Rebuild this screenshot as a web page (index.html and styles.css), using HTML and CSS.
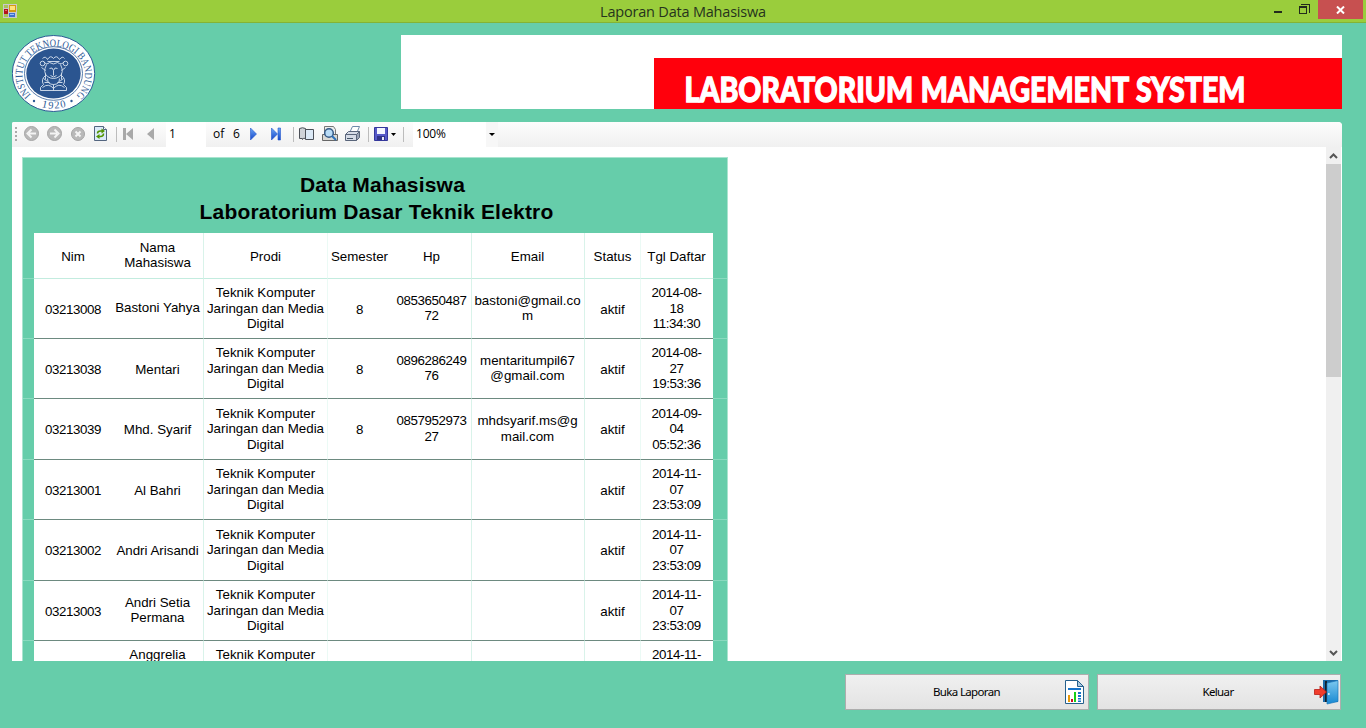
FILE: index.html
```html
<!DOCTYPE html>
<html lang="id">
<head>
<meta charset="utf-8">
<title>Laporan Data Mahasiswa</title>
<link rel="stylesheet" href="styles.css">
</head>
<body>
<div class="window">
  <header class="titlebar">
    <svg class="app-icon" width="14" height="14" viewBox="0 0 14 14"><path fill="#c9c9c9" d="M0 0h14v14H0z"/><path fill="#a9c25a" d="M1 1h4v3H1zM1 10h4v3H1z"/><path fill="#b3141a" d="M1 5h4v5H1z"/><path fill="#ee6a6a" d="M2 6h2v1H2z"/><path fill="#d39a12" d="M6 1h7v7H6z"/><path fill="#ffe27a" d="M7 2h5v4H7z"/><path fill="#3d6fd0" d="M6 9h6v4H6z"/><path fill="#9cc0f5" d="M7 10h4v1H7z"/></svg>
    <h1 class="caption">Laporan Data Mahasiswa</h1>
    <svg class="controls" width="54" height="20" viewBox="0 0 54 20" shape-rendering="crispEdges"><path fill="#222b1c" d="M10 11h8v2h-8z"/><path fill="none" stroke="#222b1c" d="M35.500 6.500h7v7h-7zM35 7.500h8M37 4.500h8.500v8"/></svg>
    <div class="close"><svg width="9" height="8" viewBox="0 0 9 8"><path stroke="#fff" stroke-width="2" d="M1 .5l7 7M8 .5l-7 7"/></svg></div>
  </header>

  <div class="brand">
    <svg class="seal" width="84" height="78" viewBox="-41.500 -38.500 84 78">
      <defs><path id="ring" d="M-22.500 21.500A31.300 28.800 0 1 1 23.500 21"/></defs>
      <ellipse rx="41.200" ry="38" fill="#fff" stroke="#2d5a96" stroke-width="1"/>
      <ellipse rx="29" ry="26.800" fill="#fff" stroke="#2d5a96" stroke-width=".8"/>
      <ellipse rx="27.200" ry="25" fill="#2b5590"/>
      <text class="seal-text"><textPath href="#ring" textLength="139" lengthAdjust="spacingAndGlyphs">INSTITUT TEKNOLOGI BANDUNG</textPath></text>
      <text class="seal-text" x="-12 -5.500 1 7.500" y="33.500 35 35 34.500" rotate="12 4 -4 -12">1920</text>
      <circle cx="-19.500" cy="27.500" r="1.200" fill="#2d5a96"/><circle cx="18" cy="27.500" r="1.200" fill="#2d5a96"/>
      <g fill="none" stroke="#d9e3ef" stroke-width=".9">
        <path d="M-11-15q3-3 5 1q3-5 6-1q3-4 6 1q3-4 5-1M-10-12q3 4 6 1q4 3 8 0q4 3 7-1M-7-9q-4 8 1 12q6 4 12 0q5-4 1-12M-4-5q3-2 4 2v5M4-5q-3-2-4 2M-3 2q3 3 6 0"/>
        <path d="M-8 2q-5 4-2 9l-3 3v3h26v-3l-3-3q3-5-2-9M-6 5q0 6 6 6t6-6M-11 14q6-5 11 1q5-6 11-1M-9 9h5M4 9h5M0 11v6M-12-6l4 3M12-6l-4 3M-10 5l4 3M10 5l-4 3M-8 0v6M8 0v6M-6-12h12"/>
        <circle cx="-11" cy="-10" r="2.300"/><circle cx="12" cy="-10" r="2.300"/>
      </g>
    </svg>
    <div class="banner">
      <svg class="banner-title" width="688" height="51" viewBox="0 0 688 51"><text class="banner-text" x="30.500" y="43.800" textLength="561" lengthAdjust="spacingAndGlyphs">LABORATORIUM MANAGEMENT SYSTEM</text></svg>
    </div>
  </div>

  <main class="viewer">
    <div class="toolbar">
      <svg class="tools" width="154" height="25" viewBox="0 0 154 25">
        <path stroke="#aaa" stroke-width="2" stroke-dasharray="2 2" d="M4 5v16"/>
        <g fill="#b9b9b9" stroke="#a5a5a5"><circle cx="19.500" cy="11.500" r="7"/><circle cx="42.500" cy="11.500" r="7"/><circle cx="66" cy="12" r="6.500"/></g>
        <g fill="none" stroke="#f4f4f4" stroke-width="2"><path d="M24 11.500h-7M19.500 7.500l-4 4 4 4M38 11.500h7M42.500 7.500l4 4-4 4M63.500 9.500l5 5M68.500 9.500l-5 5"/></g>
        <path fill="#dcebfa" stroke="#53657f" d="M82.500 4.500h9l3 3v11h-12z"/><path fill="#fff" stroke="#53657f" d="M91.500 4.500v3h3"/>
        <path fill="none" stroke="#519400" stroke-width="1.500" d="M85.500 11.500q0-2.500 3-2.500h2M91.500 11.500q0 3-3 3h-2"/><path fill="#519400" d="M89.500 6.500l3.500 2.500-3.500 2.500zM87.500 12l-3.500 2.500 3.500 2.500z"/>
        <path stroke="#bcbcbc" d="M104.500 5v15"/>
        <path fill="#a9a9a9" d="M111 6h3v12h-3zM121 6v12l-7-6zM142 6v12l-7-6z"/>
      </svg>
      <div class="page-box">1</div><span class="of">of</span><span class="total">6</span>
      <svg class="tools" width="168" height="25" viewBox="245 0 168 25">
        <defs><linearGradient id="blue" x2="0" y2="1"><stop stop-color="#6aa7f7"/><stop offset="1" stop-color="#1646c8"/></linearGradient></defs>
        <path fill="url(#blue)" stroke="#2457cd" stroke-width=".6" d="M250.500 6v12l6-6zM271.500 6v12l6-6zM278 6h2.500v12H278z"/>
        <path stroke="#bcbcbc" d="M293.500 5v15M368.500 5v15M403.500 5v15"/>
        <path fill="#d0d3d8" stroke="#4c5058" d="M299.500 6.500q3-1.500 6 0v10q-2-1-3 1v-1h-3z"/><path fill="#dce9f6" stroke="#4c5058" d="M305.500 7.500h8v10h-8z"/>
        <path fill="#eee" stroke="#777" d="M324.500 4.500h9l2 3v8h-11z"/><path fill="#d9d9d6" stroke="#666" d="M322.500 12.500h15v6h-15z"/><circle cx="329" cy="11" r="4.300" fill="#b9dcf7" stroke="#365a86" stroke-width="1.500"/><path stroke="#2d71b8" stroke-width="2" d="M332 14l4 4"/>
        <g transform="translate(12)"><path fill="#fff" stroke="#6e89aa" d="M337.500 11l3-6.500h7l-3 7z"/><path fill="#9aa3b4" stroke="#59657a" d="M344.500 12.500l3-3v6l-3 3z"/><path fill="#d5dbe6" stroke="#59657a" d="M333.500 12.500l3-3h11l-3 3v6h-11zM333.500 12.500h11"/><path stroke="#456" d="M335 16.500h6"/></g>
        <path fill="#5659c8" stroke="#34379b" d="M374.500 5.500h13v13h-13z"/><path fill="#f4f6ff" d="M377 6h8v6h-8z"/><path fill="#30338a" d="M377 14h8v4h-8z"/><path fill="#e7e7f5" d="M382 15h2v3h-2z"/>
        <path fill="#000" d="M391 11h5l-2.500 3z"/>
      </svg>
      <div class="zoom-box"><span>100%</span><div class="drop-box"><div class="drop"></div></div></div>
    </div>
    <div class="content">
      <section class="report">
        <h2 class="report-title"><span class="line-one">Data Mahasiswa</span><span class="line-two">Laboratorium Dasar Teknik Elektro</span></h2>
        <div class="table">
          <div class="row head"><div>Nim</div><div class="pair">Nama<br>Mahasiswa</div><div>Prodi</div><div>Semester</div><div>Hp</div><div>Email</div><div>Status</div><div>Tgl Daftar</div></div>
          <div class="row"><div class="num">03213008</div><div class="up">Bastoni Yahya</div><div class="full">Teknik Komputer<br>Jaringan dan Media<br>Digital</div><div class="num">8</div><div class="num up">0853650487<br>72</div><div class="up">bastoni@gmail.co<br>m</div><div>aktif</div><div class="num full">2014-08-<br>18<br>11:34:30</div></div>
          <div class="row"><div class="num">03213038</div><div>Mentari</div><div class="full">Teknik Komputer<br>Jaringan dan Media<br>Digital</div><div class="num">8</div><div class="num up">0896286249<br>76</div><div class="up">mentaritumpil67<br>@gmail.com</div><div>aktif</div><div class="num full">2014-08-<br>27<br>19:53:36</div></div>
          <div class="row tall"><div class="num">03213039</div><div>Mhd. Syarif</div><div class="full">Teknik Komputer<br>Jaringan dan Media<br>Digital</div><div class="num">8</div><div class="num up">0857952973<br>27</div><div class="up">mhdsyarif.ms@g<br>mail.com</div><div>aktif</div><div class="num full">2014-09-<br>04<br>05:52:36</div></div>
          <div class="row"><div class="num">03213001</div><div>Al Bahri</div><div class="full">Teknik Komputer<br>Jaringan dan Media<br>Digital</div><div></div><div></div><div></div><div>aktif</div><div class="num full">2014-11-<br>07<br>23:53:09</div></div>
          <div class="row tall"><div class="num">03213002</div><div>Andri Arisandi</div><div class="full">Teknik Komputer<br>Jaringan dan Media<br>Digital</div><div></div><div></div><div></div><div>aktif</div><div class="num full">2014-11-<br>07<br>23:53:09</div></div>
          <div class="row"><div class="num">03213003</div><div class="up">Andri Setia<br>Permana</div><div class="full">Teknik Komputer<br>Jaringan dan Media<br>Digital</div><div></div><div></div><div></div><div>aktif</div><div class="num full">2014-11-<br>07<br>23:53:09</div></div>
          <div class="row last"><div></div><div>Anggrelia</div><div>Teknik Komputer</div><div></div><div></div><div></div><div></div><div class="num">2014-11-</div></div>
        </div>
      </section>
      <div class="scrollbar">
        <svg width="15" height="17" viewBox="0 0 15 17"><path fill="none" stroke="#555" stroke-width="2" d="M4 11l3.500-3.500L11 11"/></svg>
        <div class="thumb"></div>
        <svg width="15" height="17" viewBox="0 0 15 17"><path fill="none" stroke="#555" stroke-width="2" d="M4 7l3.500 3.500L11 7"/></svg>
      </div>
    </div>
  </main>

  <footer class="actions">
    <button class="btn"><span>Buka Laporan</span>
      <svg width="20" height="25" viewBox="0 0 20 25"><path fill="#fff" stroke="#26608c" d="M.5 .5h12l6 6v17H.5z"/><path fill="#a9c8df" stroke="#26608c" d="M12.500 .5v6h6z"/><path fill="#1673c9" d="M3 8h13v2H3zM13 12h3v2h-3zM13 15h3v2h-3zM13 18h3v1.500h-3zM13 20.500h3v1.500h-3z"/><path fill="#e99a0a" d="M3 15h2v7H3z"/><path fill="#d00b1c" d="M6 19h2v3H6z"/><path fill="#15cf15" d="M9 12h2v10H9z"/></svg>
    </button>
    <button class="btn exit"><span>Keluar</span>
      <svg width="25" height="25" viewBox="0 0 25 25"><defs><linearGradient id="door" x2="0" y2="1"><stop stop-color="#7cc8ef"/><stop offset="1" stop-color="#1688d2"/></linearGradient></defs><path fill="#1d6aa8" d="M9 0h15v22H9z"/><path fill="#14202c" d="M11 1h2v21h-2z"/><path fill="url(#door)" stroke="#1a78bb" stroke-width=".7" d="M13 3l11-2.500v21L13 24z"/><circle cx="14.800" cy="14" r="1" fill="#e6f5ff"/><path fill="#f03d2c" stroke="#b91c14" stroke-width=".8" d="M.5 9.500H6V6l6.500 6L6 18v-3.500H.5z"/></svg>
    </button>
  </footer>
</div>
</body>
</html>
```
FILE: styles.css
```css
* { box-sizing: border-box; }
body { margin: 0; overflow: hidden; font-family: "Open Sans", sans-serif; color: #000; }
.window { width: 1366px; height: 728px; background: #66cdaa; }
svg { display: block; flex: none; }

.titlebar { height: 23px; display: flex; align-items: flex-start; background: #9acd3c; border-bottom: 1px solid #84b335; }
.app-icon { margin: 4px 0 0 3px; }
.caption { flex: 1; margin: 0; padding-left: 85px; text-align: center; font-size: 14.5px; line-height: 23px; font-weight: 400; color: #26331c; letter-spacing: -.2px; }
.close { width: 45px; height: 19px; margin-right: 3px; display: flex; align-items: center; justify-content: center; background: #c75050; }

.brand { height: 99px; padding: 12px 24px 0 12px; display: flex; justify-content: space-between; }
.seal-text { font: 10.5px "Liberation Serif", serif; fill: #2d5a96; }
.banner { width: 941px; height: 74px; padding: 23px 0 0 253px; background: #fff; }
.banner-title { background: #ff000c; overflow: visible; }
.banner-text { font: 900 34.5px Lato, sans-serif; fill: #fff; stroke: #fff; stroke-width: 1.3px; word-spacing: 1px; }

.viewer { width: 1330px; height: 539px; margin-left: 12px; background: #fff; }
.toolbar { height: 25px; display: flex; background: linear-gradient(#fdfdfd, #f0f0f0); font-size: 12px; line-height: 24px; }
.viewer, .toolbar { border-radius: 2px 4px 0 0; }
.page-box { width: 40px; padding-left: 3px; background: #fff; }
.of { width: 20px; margin-left: 7px; }
.total { width: 12px; }
.zoom-box { width: 85px; padding-left: 3px; display: flex; justify-content: space-between; background: #fff; letter-spacing: -.2px; }
.drop-box { width: 12px; padding: 11px 0 0 3px; background: #f7f7f7; }
.drop { width: 6px; border: 3px solid transparent; border-top-color: #000; border-bottom: 0; }

.content { height: 514px; display: flex; justify-content: space-between; overflow: hidden; }
.report { width: 706px; height: 504px; margin: 10px 0 0 10px; overflow: hidden; background: #66cdaa; border: solid #a9e4cf; border-width: 1px 1px 0; }
.report-title { height: 75px; margin: 0; padding-top: 13px; text-align: center; font: bold 21px/27px "Liberation Sans", Arial, sans-serif; letter-spacing: .2px; }
.report-title span { display: block; padding-left: 3px; }
.report-title .line-one { padding-left: 15px; }
.table { font: 13.33px/15.4px "Liberation Sans", Arial, sans-serif; }
.row { height: 60px; padding: 0 14px 0 11px; display: grid; grid-template-columns: 78px 92px 124px 64px 80px 113px 56px 72px; background: linear-gradient(#8ad9be, #8ad9be) 0 100% / 100% 1px no-repeat; }
.row > div { padding: 2px 0 0; display: flex; align-items: center; justify-content: center; text-align: center; white-space: nowrap; background: #fff; border-bottom: 1px solid #6d8a80; }
.row > :nth-child(2), .row > :nth-child(5), .row > :nth-child(6) { border-right: 1px solid #d9f3ea; }
.row > :nth-child(3), .row > :nth-child(7) { border-right: 1px solid #ebfaf5; }
.row > :nth-child(4), .row > :nth-child(6) { padding-right: 1px; }
.row > :nth-child(8) { padding-right: 1px; }
.row.head { height: 46px; }
.row.head > div { border-bottom-color: #c3ecdf; }
.row.tall { height: 61px; }
.row .num { letter-spacing: -.4px; }
.row > .up { padding-top: 0; padding-bottom: 1px; }
.row > .full { padding-top: 0; }
.row > .pair { padding-top: 0; padding-bottom: 1px; }
.row.last > div { align-items: flex-start; padding-top: 6px; }

.scrollbar { width: 15px; margin-right: 1px; display: flex; flex-direction: column; background: #f0f0f0; }
.thumb { height: 213px; margin-bottom: auto; background: #cdcdcd; }

.actions { height: 67px; padding: 13px 25px 0; display: flex; justify-content: flex-end; gap: 8px; }
.btn { width: 244px; height: 36px; padding: 0 3px 0 6px; display: flex; align-items: center; border: 1px solid #adadad; background: linear-gradient(#f0f0f0, #e3e3e3); font: 11.5px "Noto Sans", sans-serif; letter-spacing: -.65px; color: #000; }
.btn span { flex: 1; padding: 0 0 2px 16px; }
.btn.exit { padding-right: 1px; }
.btn.exit span { padding-left: 18px; }
```
